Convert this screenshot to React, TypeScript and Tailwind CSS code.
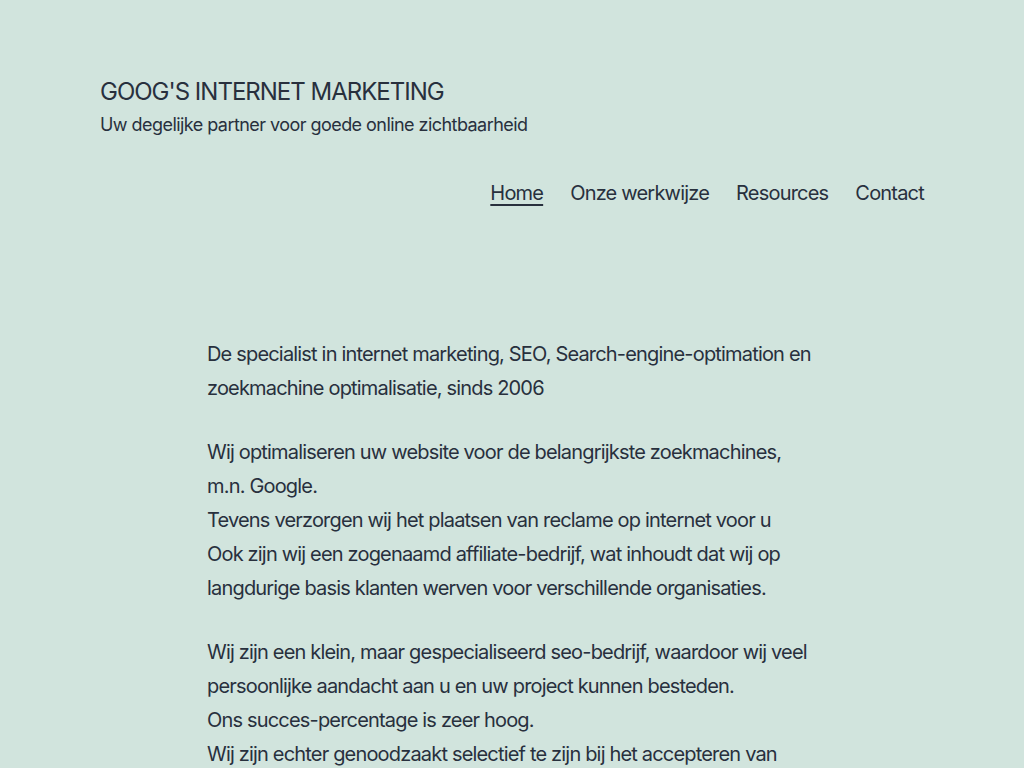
const paragraphs: string[][] = [
  ["De specialist in internet marketing, SEO, Search-engine-optimation en zoekmachine optimalisatie, sinds 2006"],
  [
    "Wij optimaliseren uw website voor de belangrijkste zoekmachines, m.n. Google.",
    "Tevens verzorgen wij het plaatsen van reclame op internet voor u",
    "Ook zijn wij een zogenaamd affiliate-bedrijf, wat inhoudt dat wij op langdurige basis klanten werven voor verschillende organisaties.",
  ],
  [
    "Wij zijn een klein, maar gespecialiseerd seo-bedrijf, waardoor wij veel persoonlijke aandacht aan u en uw project kunnen besteden.",
    "Ons succes-percentage is zeer hoog.",
    "Wij zijn echter genoodzaakt selectief te zijn bij het accepteren van nieuwe opdrachten.",
  ],
];

const navItems = ["Home", "Onze werkwijze", "Resources", "Contact"];

export default function App() {
  return (
    <div className="min-h-screen bg-[#d1e4dd] text-[#28303d] font-['Inter',sans-serif]">
      {/* Header */}
      <header className="px-[100px] pt-[76px]">
        <p className="text-[24px] leading-[31px] uppercase tracking-[-1px]">Goog's Internet Marketing</p>
        <p className="mt-[5px] text-[18px] leading-[25px] tracking-[-0.55px]">
          Uw degelijke partner voor goede online zichtbaarheid
        </p>
        <nav className="mt-[43px] flex justify-end gap-[27px] text-[20px] leading-[26px] tracking-[-0.8px]">
          {navItems.map((item, i) => (
            <a
              key={item}
              href="#"
              className={i === 0 ? "underline decoration-2 underline-offset-[4px]" : ""}
            >
              {item}
            </a>
          ))}
        </nav>
      </header>

      {/* Content */}
      <main className="mx-auto mt-[131px] w-[610px] text-[20px] leading-[34px] tracking-[-0.82px]">
        {paragraphs.map((lines, i) => (
          <p key={i} className="mb-[30px]">
            {lines.map((line, j) => (
              <span key={j}>
                {line}
                {j < lines.length - 1 && <br />}
              </span>
            ))}
          </p>
        ))}
      </main>
    </div>
  );
}
